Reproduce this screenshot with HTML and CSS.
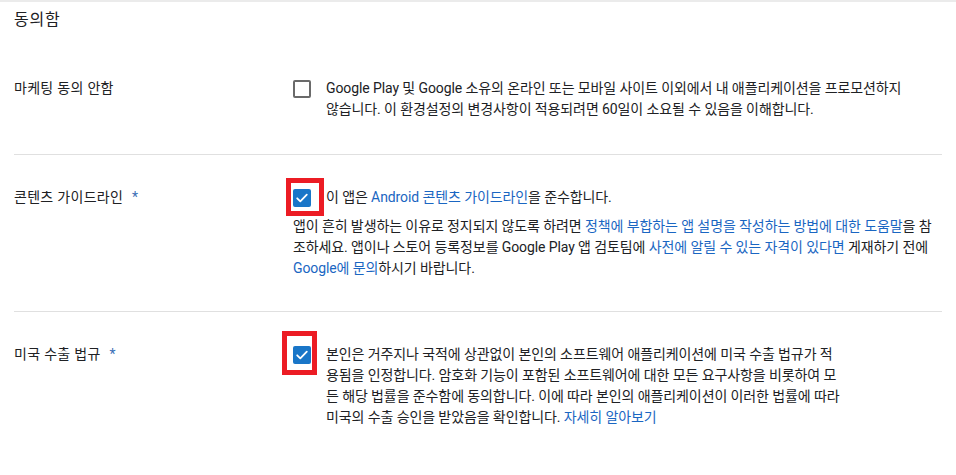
FILE: index.html
```html
<!DOCTYPE html>
<html lang="ko">
<head>
<meta charset="utf-8">
<title>동의함</title>
<link rel="stylesheet" href="styles.css">
</head>
<body>
<div class="topbar"></div>
<main class="page">
  <h2 class="title">동의함</h2>

  <section class="row row-first">
    <div class="label">마케팅 동의 안함</div>
    <div class="field">
      <div class="check-line">
        <span class="cb"></span>
        <p class="text">Google Play 및 Google 소유의 온라인 또는 모바일 사이트 이외에서 내 애플리케이션을 프로모션하지<br>않습니다. 이 환경설정의 변경사항이 적용되려면 60일이 소요될 수 있음을 이해합니다.</p>
      </div>
    </div>
  </section>

  <div class="divider"></div>

  <section class="row">
    <div class="label">콘텐츠 가이드라인 <span class="req">*</span></div>
    <div class="field">
      <div class="check-line">
        <span class="cb checked mark-a"><svg viewBox="0 0 18 18" width="18" height="18"><path d="M4.2 9.3l3.1 3 6.5-6.6" fill="none" stroke="#fff" stroke-width="1.8" stroke-linecap="round" stroke-linejoin="round"/></svg></span>
        <p class="text">이 앱은 <a href="#">Android 콘텐츠 가이드라인</a>을 준수합니다.</p>
      </div>
      <p class="note">앱이 흔히 발생하는 이유로 정지되지 않도록 하려면 <a href="#">정책에 부합하는 앱 설명을 작성하는 방법에 대한 도움말</a>을 참<br>조하세요. 앱이나 스토어 등록정보를 Google Play 앱 검토팀에 <a href="#">사전에 알릴 수 있는 자격이 있다면</a> 게재하기 전에<br><a href="#">Google에 문의</a>하시기 바랍니다.</p>
    </div>
  </section>

  <div class="divider"></div>

  <section class="row">
    <div class="label">미국 수출 법규 <span class="req">*</span></div>
    <div class="field">
      <div class="check-line">
        <span class="cb checked mark-b"><svg viewBox="0 0 18 18" width="18" height="18"><path d="M4.2 9.3l3.1 3 6.5-6.6" fill="none" stroke="#fff" stroke-width="1.8" stroke-linecap="round" stroke-linejoin="round"/></svg></span>
        <p class="text">본인은 거주지나 국적에 상관없이 본인의 소프트웨어 애플리케이션에 미국 수출 법규가 적<br>용됨을 인정합니다. 암호화 기능이 포함된 소프트웨어에 대한 모든 요구사항을 비롯하여 모<br>든 해당 법률을 준수함에 동의합니다. 이에 따라 본인의 애플리케이션이 이러한 법률에 따라<br>미국의 수출 승인을 받았음을 확인합니다. <a href="#">자세히 알아보기</a></p>
      </div>
    </div>
  </section>
</main>
</body>
</html>
```

FILE: styles.css
```css
html, body {
  margin: 0;
  padding: 0;
  background: #fff;
  overflow: hidden;
}

body {
  font-family: Roboto, "Noto Sans CJK KR", sans-serif;
  color: #202124;
  font-size: 14px;
  line-height: 21px;
  letter-spacing: -0.1px;
}

.topbar {
  height: 2px;
  background: #ebebeb;
}

.page {
  padding: 0 14px;
}

.title {
  margin: 6px 0 0;
  font-size: 16px;
  line-height: 24px;
  font-weight: 400;
  letter-spacing: 0.8px;
  padding-bottom: 14px;
}

.row {
  display: flex;
  padding: 32px 0;
}

.row-first {
  padding-bottom: 34px;
}

.label {
  width: 279px;
  flex: none;
  letter-spacing: 0.3px;
}

.req {
  color: #3b6fb6;
  margin-left: 5px;
}

.field {
  flex: 1;
  min-width: 0;
}

.check-line {
  display: flex;
  align-items: flex-start;
  gap: 15px;
}

.cb {
  position: relative;
  flex: none;
  width: 18px;
  height: 18px;
  margin-top: 2px;
  box-sizing: border-box;
  border: 2px solid #6a6a6a;
  border-radius: 2px;
}

.cb.checked {
  border: none;
  background: #1976c8;
}

.cb svg {
  display: block;
}

.cb.mark-a::after,
.cb.mark-b::after {
  content: "";
  position: absolute;
  border: 5px solid #ec1c24;
  box-sizing: border-box;
}

.cb.mark-a::after {
  left: -7px;
  top: -11px;
  width: 38px;
  height: 38px;
}

.cb.mark-b::after {
  left: -11px;
  top: -15px;
  width: 35px;
  height: 44px;
}

.text {
  margin: 0;
  white-space: nowrap;
}

.note {
  margin: 8px 0 0;
  white-space: nowrap;
}

a {
  color: #1a66c2;
  text-decoration: none;
}

.divider {
  height: 1px;
  background: #e0e0e0;
}
```
